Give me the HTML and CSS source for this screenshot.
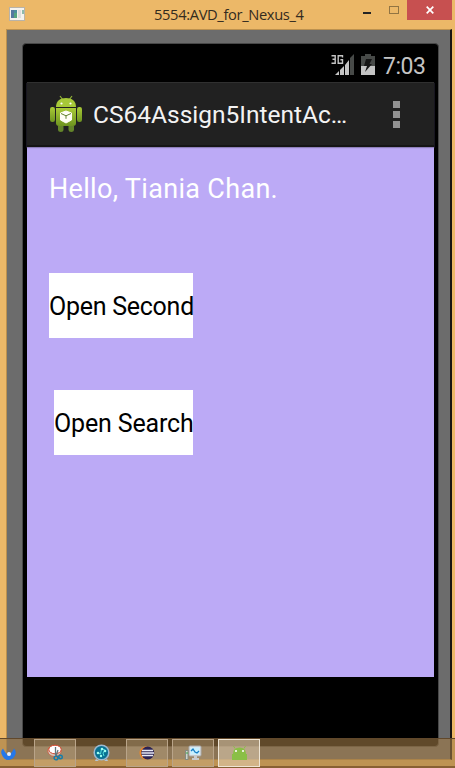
FILE: index.html
```
<!DOCTYPE html>
<html lang="en">
<head>
<meta charset="utf-8">
<title>5554:AVD_for_Nexus_4</title>
<link rel="stylesheet" href="styles.css">
</head>
<body>
<div class="window">
  <header class="titlebar">
    <svg class="app-icon" width="16" height="14" viewBox="0 0 16 14">
      <rect x=".5" y=".5" width="15" height="13" fill="#f5f3ef" stroke="#b9b3a8"/>
      <rect x="2" y="3" width="6" height="8" fill="#4b8e9d"/><path d="M2 3h3v8H2z" fill="#5479a0"/><path d="M5 6h3v5H5z" fill="#55a580"/>
      <rect x="9" y="3" width="3" height="8" fill="#dedede"/><rect x="13" y="3" width="2" height="4" fill="#8ebbae"/>
    </svg>
    <h1 class="window-title">5554:AVD_for_Nexus_4</h1>
    <div class="controls">
      <svg width="48" height="20" viewBox="0 0 48 20"><rect x="4" y="12" width="8" height="2" fill="#242424"/><rect x="30.500" y="6.500" width="9" height="7" fill="none" stroke="#917443"/></svg>
      <button class="close" aria-label="Close"><svg width="8" height="8" viewBox="0 0 8 8"><path d="M.7.7l6.600 6.600M7.300.7L.7 7.300" stroke="#fff" stroke-width="1.700"/></svg></button>
    </div>
  </header>
  <main class="frame">
    <div class="device">
      <div class="status">
        <svg width="24" height="24" viewBox="0 0 24 24">
          <g fill="none" stroke="#c4c4c4" stroke-width="1.400"><path d="M.5 1.700h3.700v7.600H.5M1.500 5.300h2.700M11.500 3.500V1.700H7.200v7.600h4.300V5.700H9.400"/></g>
          <path d="M4 21l4-4v4zM9 16l4-4v9H9zM14 11l4-5v15h-4z" fill="#c4c4c4"/><path d="M19 4l4-4v21h-4z" fill="#474a48"/>
        </svg>
        <svg class="battery" width="14" height="21" viewBox="0 0 14 21"><path d="M0 2h4V0h6v2h4v10H0z" fill="#474a48"/><path d="M0 12h14v9H0z" fill="#c4c4c4"/><path d="M5 5h6L8.500 10H11L4 18l2-6H3z" fill="#151515"/></svg>
        <span class="clock">7:03</span>
      </div>
      <section class="screen">
        <div class="actionbar">
          <svg class="droid" width="34" height="38" viewBox="0 0 34 38">
            <defs><linearGradient id="body" x2="0" y2="1"><stop stop-color="#aacb37"/><stop offset="1" stop-color="#6e9420"/></linearGradient></defs>
            <path d="M11 1l3 4M23 1l-3 4" stroke="#8eae38" stroke-width="1.200"/>
            <path d="M7 12C7 6 11 3 17 3s10 3 10 9z" fill="#a7c938"/>
            <path d="M7 13h20v15q0 3-3 3H10q-3 0-3-3z" fill="url(#body)"/>
            <rect x="1" y="12" width="5" height="15" rx="2.200" fill="url(#body)"/><rect x="28" y="12" width="5" height="15" rx="2.200" fill="url(#body)"/>
            <path d="M9 31h5.500v4q0 2-2.700 2T9 35zM19.500 31H25v4q0 2-2.700 2t-2.800-2z" fill="#64852a"/>
            <circle cx="12.500" cy="8.500" r="1.100" fill="#fff"/><circle cx="21.500" cy="8.500" r="1.100" fill="#fff"/>
            <path d="M17 16l5.500 2v7L17 28l-5.500-3v-7z" fill="#fffef5" stroke="#fffef5" stroke-linejoin="round"/><path d="M12 18.500l5 2.300 5-2.300M17 20.800v3" fill="none" stroke="#61812d" stroke-width="1"/>
          </svg>
          <span class="app-name">CS64Assign5IntentAc…</span>
          <span class="overflow"><i></i><i></i><i></i></span>
        </div>
        <div class="content">
          <p class="hello">Hello, Tiania Chan.</p>
          <button class="btn second">Open Second</button>
          <button class="btn search">Open Search</button>
        </div>
      </section>
    </div>
  </main>
  <nav class="taskbar">
    <span class="tray"><svg width="16" height="14" viewBox="0 0 16 14"><path d="M3 1.500Q0 4 2 8q2 5 6.500 5V9L5 5zM14 1.500q3 3 1 7-2 4-6.500 4.500V9L12 5z" fill="#2678e8"/><circle cx="9" cy="7" r="2" fill="#e7edf7"/></svg></span>
    <span class="task"><svg width="17" height="18" viewBox="0 0 17 18"><ellipse cx="7.500" cy="7" rx="6.800" ry="5.500" fill="#d6c5ba" stroke="#c7684b"/><ellipse cx="8" cy="5.500" rx="6.200" ry="4.300" fill="#fff" stroke="#d4472d"/><path d="M8.500 3v8l4 3M11 6l-2 6" stroke="#65747b" stroke-width="1.300" fill="none"/><circle cx="9" cy="14" r="1.900" fill="none" stroke="#147dab" stroke-width="1.400"/><circle cx="13.500" cy="13" r="1.800" fill="none" stroke="#147dab" stroke-width="1.400"/></svg></span>
    <span class="task plain"><svg width="17" height="18" viewBox="0 0 17 18"><circle cx="8.500" cy="8.500" r="7.300" fill="#087192" stroke="#9dbad2" stroke-width="1.500"/><path d="M3 15l-1 2h4M14 15l1 2h-4" fill="#b4c6d8"/><path d="M4.500 9l3 1 1-5 3.500 1-2 3 1 3" stroke="#54e1e0" fill="none"/><g fill="#9ffff1"><circle cx="5" cy="9" r="1.300"/><circle cx="9" cy="5" r="1.300"/><circle cx="8" cy="12" r="1.200"/><circle cx="12" cy="7" r="1.300"/></g></svg></span>
    <span class="task"><svg width="16" height="14" viewBox="0 0 16 14"><circle cx="7" cy="7" r="6.500" fill="#f28724"/><circle cx="8.700" cy="7" r="6.500" fill="#2c2352"/><path d="M3 4.500h11M2.500 7H15M3 9.500h11" stroke="#e8eaf6" stroke-width="1.300"/></svg></span>
    <span class="task"><svg width="17" height="16" viewBox="0 0 17 16"><rect x="4" y="1" width="12" height="10" rx="1" fill="#e1e5e7" stroke="#a8abad"/><rect x="5.500" y="2.500" width="9" height="7" fill="#c7f0ff"/><path d="M6 6l2-2 2 3 2 1 2-2" fill="none" stroke="#197fc6" stroke-width="1.300"/><path d="M9 11h3v2h2v2H7v-2h2z" fill="#c9cbcd"/><rect x=".5" y="5.500" width="2.500" height="9" fill="#cdd3cc" stroke="#858b81"/><path d="M1 8h2" stroke="#39a94b"/></svg></span>
    <span class="task active"><svg width="15" height="16" viewBox="0 0 15 16"><path d="M3 3.500L1.500 1M12 3.500L13.500 1" fill="none" stroke="#8cbd4a"/><path d="M0 15V9h1Q1 2.500 7.500 2.500T14 9h1v6z" fill="#8abf46"/><path d="M3 5h2v2H3zM10 5h2v2h-2z" fill="#e5efd4"/></svg></span>
  </nav>
</div>
</body>
</html>
```
FILE: styles.css
```
* { box-sizing: border-box; }
body { margin: 0; overflow: hidden; background: #ecb868; font-family: Roboto, sans-serif; }
button { border: 0; border-radius: 0; padding: 0; font: inherit; text-align: left; }
svg { display: block; flex: none; }
.window { position: relative; width: 455px; height: 768px; background: #ecb868; }
.titlebar { display: flex; height: 29px; padding: 0 3px 0 9px; }
.app-icon { margin-top: 7px; }
.window-title { flex: 1; margin: 0 0 0 129px; font: 400 14.700px/29px "Open Sans", sans-serif; letter-spacing: -.35px; color: #332b20; white-space: nowrap; }
.controls { display: flex; align-items: flex-start; }
.close { display: grid; place-items: center; width: 45px; height: 20px; background: #c75050; }
.frame { width: 446px; height: 731px; margin-left: 6px; padding: 13px 12px 0 15px; background: #6c6c6c; border: 1px solid #bc914f; border-right: 2px solid #171513; }
.device { width: 417px; height: 704px; background: #000; border: 1px solid #484848; border-radius: 4px; padding: 0 4px; }
.status { display: flex; height: 38px; padding: 10px 7px 0 304px; }
.battery { margin: 0 0 0 6px; }
.clock { margin-left: 8px; color: #c4c4c4; font-size: 23px; line-height: 25px; letter-spacing: -.5px; }
.screen { width: 407px; height: 595px; background: #bcaaf6; }
.actionbar { display: flex; align-items: center; height: 65px; padding: 0 34px 0 22px; background: #212121; border-top: 1px solid #303030; border-bottom: 2px solid #151515; box-shadow: inset 0 0 #000, 0 1px 1px #8f80bb; }
.app-name { flex: 1; margin-left: 10px; padding-top: 2px; color: #f3f3f3; font-size: 24.500px; line-height: 32px; white-space: nowrap; }
.overflow { display: grid; gap: 3px; }
.overflow i { width: 7px; height: 7px; background: #929292; }
.content { display: flex; flex-direction: column; align-items: flex-start; padding: 26px 22px; }
.hello { margin: 0; height: 34px; color: #fff; font-size: 27px; line-height: 33px; letter-spacing: .32px; white-space: nowrap; }
.btn { height: 65px; background: #fff; color: #000; font-size: 25px; line-height: 67px; letter-spacing: -.26px; white-space: nowrap; }
.second { width: 144px; margin-top: 66px; }
.search { width: 139px; margin: 52px 0 0 5px; letter-spacing: -.15px; }
.taskbar { position: absolute; inset: 738px 0 0; display: flex; gap: 4px; padding-top: 1px; background: rgba(160,122,70,.6); border-top: 1px solid #61482b; border-bottom: 2px solid #886033; }
.tray { width: 30px; padding-top: 7px; }
.task { display: grid; place-items: center; flex: none; width: 42px; height: 28px; margin-top: -1px; border: 1px solid #b9a489; background: rgba(210,185,150,.3); }
.plain { border-color: transparent; background: none; }
.active { border-color: #eee5d5; background: rgba(225,207,180,.55); }
```
